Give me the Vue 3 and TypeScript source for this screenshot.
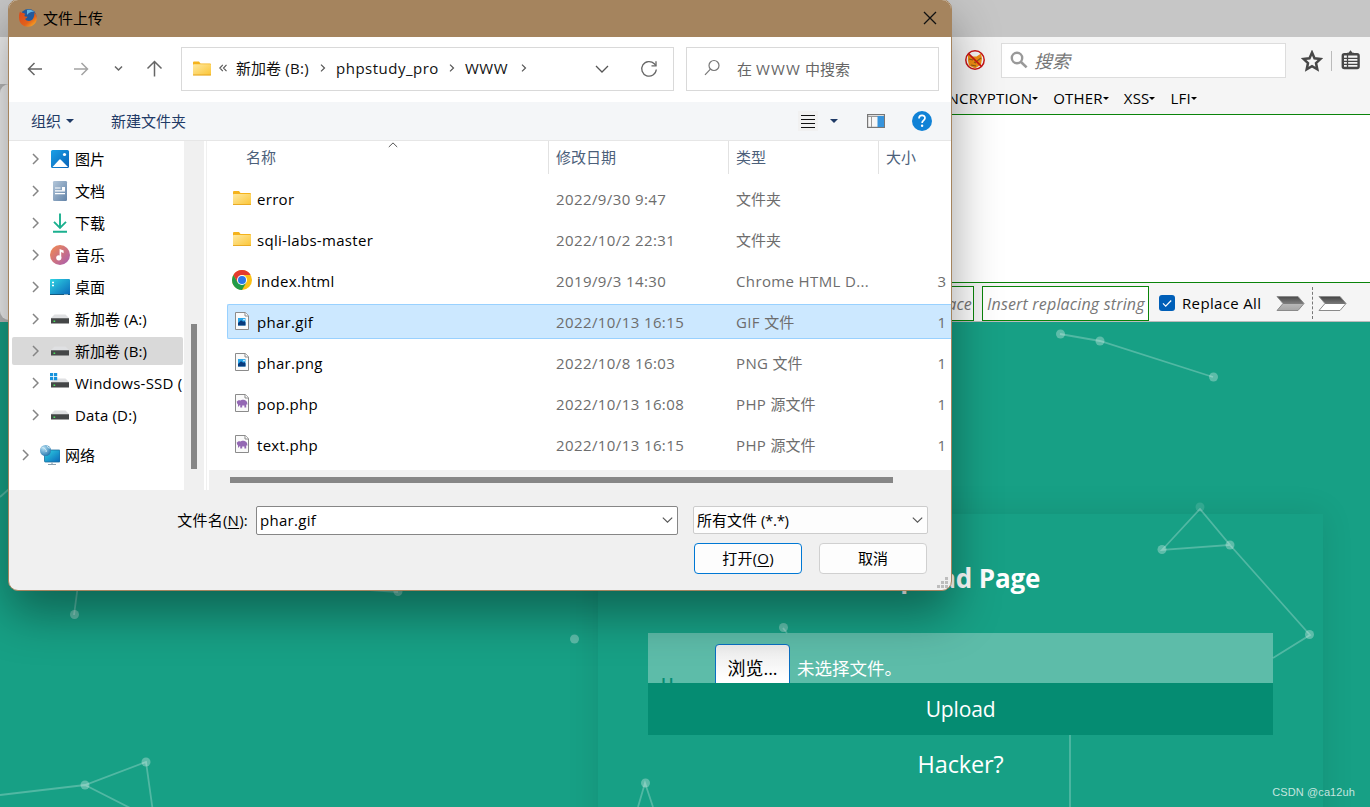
<script setup lang="ts">
interface TreeItem { icon: string; label: string; latin?: string; active?: boolean; root?: boolean }
interface FileRow { icon: string; name: string; date: string; kind: string; kindCjk: string; size: string; active?: boolean }

const tree: TreeItem[] = [
  { icon: 'pictures', label: '图片' },
  { icon: 'docs', label: '文档' },
  { icon: 'downloads', label: '下载' },
  { icon: 'music', label: '音乐' },
  { icon: 'desktop', label: '桌面' },
  { icon: 'drive', label: '新加卷', latin: ' (A:)' },
  { icon: 'drive', label: '新加卷', latin: ' (B:)', active: true },
  { icon: 'windrive', label: '', latin: 'Windows-SSD (' },
  { icon: 'drive', label: '', latin: 'Data (D:)' },
  { icon: 'network', label: '网络', root: true },
]

const files: FileRow[] = [
  { icon: 'folder', name: 'error', date: '2022/9/30 9:47', kind: '', kindCjk: '文件夹', size: '' },
  { icon: 'folder', name: 'sqli-labs-master', date: '2022/10/2 22:31', kind: '', kindCjk: '文件夹', size: '' },
  { icon: 'chrome', name: 'index.html', date: '2019/9/3 14:30', kind: 'Chrome HTML D...', kindCjk: '', size: '3' },
  { icon: 'image', name: 'phar.gif', date: '2022/10/13 16:15', kind: 'GIF ', kindCjk: '文件', size: '1', active: true },
  { icon: 'image', name: 'phar.png', date: '2022/10/8 16:03', kind: 'PNG ', kindCjk: '文件', size: '1' },
  { icon: 'php', name: 'pop.php', date: '2022/10/13 16:08', kind: 'PHP ', kindCjk: '源文件', size: '1' },
  { icon: 'php', name: 'text.php', date: '2022/10/13 16:15', kind: 'PHP ', kindCjk: '源文件', size: '1' },
]

const menus = ['ENCRYPTION', 'OTHER', 'XSS', 'LFI']

const dots: [number, number][] = [
  [1060.5, 12], [1100, 19], [1213.5, 55], [1162, 227.5], [1230, 223], [1309.5, 312.5], [783.5, 305.5],
  [574.5, 317], [74.5, 292.5], [398, 269.5], [146, 440], [85, 463], [645.5, 461],
]
</script>

<template>
  <div class="screen">
    <svg class="defs" width="0" height="0">
      <defs>
        <linearGradient id="gFolder" x1="0" y1="0" x2="1" y2="1"><stop offset="0" stop-color="#ffe9a0" /><stop offset="1" stop-color="#fbc536" /></linearGradient>
        <linearGradient id="gBlue" x1="0" y1="0" x2="1" y2="1"><stop offset="0" stop-color="#1aa0e6" /><stop offset="1" stop-color="#0862b8" /></linearGradient>
        <linearGradient id="gDesk" x1="0" y1="0" x2="1" y2="1"><stop offset="0" stop-color="#2fd5e3" /><stop offset="1" stop-color="#0a67ba" /></linearGradient>
        <linearGradient id="gDoc" x1="0" y1="0" x2="1" y2="1"><stop offset="0" stop-color="#b3c6d9" /><stop offset="1" stop-color="#6283a8" /></linearGradient>
        <linearGradient id="gMusic" x1="0" y1="0" x2="1" y2="1"><stop offset="0" stop-color="#f58b4c" /><stop offset="1" stop-color="#a65bb4" /></linearGradient>
        <linearGradient id="gFox" x1="0" y1="0" x2="1" y2="1"><stop offset="0" stop-color="#d8481c" /><stop offset=".6" stop-color="#e2601a" /><stop offset="1" stop-color="#ffbf2a" /></linearGradient>
        <linearGradient id="gArrow" x1="0" y1="0" x2="0" y2="1"><stop offset="0" stop-color="#4a4a4a" /><stop offset=".5" stop-color="#7c7c7c" /><stop offset=".52" stop-color="#b8b8b8" /><stop offset="1" stop-color="#a5a5a5" /></linearGradient>
        <linearGradient id="gArrow2" x1="0" y1="0" x2="0" y2="1"><stop offset="0" stop-color="#444" /><stop offset=".5" stop-color="#777" /><stop offset=".52" stop-color="#fff" /><stop offset="1" stop-color="#fff" /></linearGradient>
        <radialGradient id="gGlobe" cx=".35" cy=".3" r=".8"><stop offset="0" stop-color="#b5e0f5" /><stop offset="1" stop-color="#1b6fa8" /></radialGradient>
      </defs>
    </svg>

    <div class="browser">
      <div class="tabs"></div>
      <div class="navbar">
        <svg class="fox-off" width="20" height="20" viewBox="0 0 20 20">
          <path d="M3 4l4 2.500h4.500l4.500-3 1 5-1 6-6 4-6-3-1-5z" fill="#ef8d12" />
          <path d="M4 9l4 1M12 11l4-3M6 15l5 1M9 12l2 1" stroke="#8a5a1a" stroke-width="1.100" />
          <circle cx="10" cy="10" r="9.200" fill="none" stroke="#c81414" stroke-width="1.500" />
          <path d="M3.600 3.600l12.800 12.800" stroke="#c81414" stroke-width="1.500" />
        </svg>
        <div class="searchbox">
          <svg width="18" height="18" viewBox="0 0 18 18"><circle cx="7" cy="7" r="5.200" fill="none" stroke="#999" stroke-width="2.400" /><path d="M11 11l5.600 5.400" stroke="#999" stroke-width="2.600" /></svg>
          <span>搜索</span>
        </div>
        <svg class="star" width="22" height="22" viewBox="0 0 22 22"><path d="M11 2.600l2.500 5.700 6 .6-4.500 4.200 1.300 6.200L11 16.200l-5.300 3.100L7 13.100 2.500 8.900l6-.6z" fill="none" stroke="#474747" stroke-width="2.500" /></svg>
        <i class="vsep"></i>
        <svg class="clip" width="20" height="20" viewBox="0 0 20 20"><path d="M6 4V2.800h1.500L9.500.300l2 2.500H13V4" fill="#474747" /><rect x="1.800" y="4.200" width="15.800" height="13.800" rx="1.500" fill="none" stroke="#474747" stroke-width="2.400" /><path d="M3 8.300h14M3 11.300h14M3 14.300h14M6.500 5v12" stroke="#474747" stroke-width="1.300" /></svg>
      </div>
      <div class="menubar">
        <span v-for="m in menus" :key="m" class="menu">{{ m }}<i></i></span>
      </div>
      <div class="blank"></div>
      <div class="replacebar">
        <div class="rin first"><span>Insert replace</span></div>
        <div class="rin"><span>Insert replacing string</span></div>
        <svg class="check" width="16" height="16" viewBox="0 0 16 16"><rect width="16" height="16" rx="3" fill="#005fb8" /><path d="M4 8.400l2.700 2.700L12.200 5.500" fill="none" stroke="#fff" stroke-width="1.200" /></svg>
        <span class="rall">Replace All</span>
        <svg class="arr" width="29" height="17" viewBox="0 0 29 17"><path d="M1 1.500h21l6 7-6 7H1l6-7z" fill="url(#gArrow)" stroke="#8a8a8a" /></svg>
        <i class="dash"></i>
        <svg class="arr" width="29" height="17" viewBox="0 0 29 17"><path d="M1 1.500h21l6 7-6 7H1l6-7z" fill="url(#gArrow2)" stroke="#8a8a8a" /></svg>
      </div>
      <div class="page">
        <svg class="particles" width="1370" height="485" viewBox="0 0 1370 485">
          <g stroke="#fff" stroke-opacity=".25" stroke-width="1.800" fill="none">
            <path d="M1060 12L1100 19 1213 55M1162 228L1200 187 1230 223zM1230 223L1310 313 1273 336M1070 413v72M783 306l4 5M74 293l4-30M370 268l28 2M0 473l85-10 61-23 7 50M85 463l55 28M638 485l7-24 8 24M0 175l9-8" />
          </g>
          <g fill="#fff" fill-opacity=".3"><circle v-for="(d, i) in dots" :key="i" :cx="d[0]" :cy="d[1]" r="4.500" /><circle cx="1200" cy="185" r="4.500" fill-opacity=".12" /></g>
        </svg>
        <div class="card">
          <h1>Upload Page</h1>
          <div class="field">
            <span class="ghost">U</span>
            <span class="browse">浏览...</span>
            <span class="nofile">未选择文件。</span>
          </div>
          <div class="submit">Upload</div>
          <div class="hacker">Hacker?</div>
        </div>
        <div class="mark">CSDN @ca12uh</div>
      </div>
    </div>
    <div class="edge"><i></i><b></b></div>

    <div class="dialog">
      <div class="title">
        <svg width="20" height="20" viewBox="0 0 20 20"><circle cx="10.500" cy="9" r="8" fill="#225a9c" /><path d="M9 2c3-1 6 .2 7.500 2-3-.8-6 .6-7.500 3z" fill="#64b4e2" /><path d="M2 3.500c.4 1 1.400 1.500 2.800 1.300L7.500 6c-1 .8-1.500 1.700-.6 2.400l2.600.4c-.4 1.400-1.700 1.600-2.400 2.100 1.300 2.600 6.300 2.900 8.200-.6.800-2.200 1.500-4 1-6 2 1.800 2.800 4.300 2.500 7-.6 4.300-4.200 7.500-8.800 7.500C5 18.800 1 15 1 10 .9 7.500 1.200 5.300 2 3.500z" fill="url(#gFox)" /></svg>
        <span>文件上传</span>
        <svg class="close" width="14" height="14" viewBox="0 0 14 14"><path d="M1 1l12 12M13 1L1 13" stroke="#111" stroke-width="1.300" /></svg>
      </div>

      <div class="nav">
        <svg class="arrows" width="136" height="20" viewBox="0 0 136 20" fill="none" stroke-width="1.500">
          <path d="M15 10H1.500M7.500 4l-6 6 6 6" stroke="#666" />
          <path d="M47 10h13.500M54.500 4l6 6-6 6" stroke="#a3a3a3" />
          <path d="M88 7.500l3.500 3.500L95 7.500" stroke="#666" />
          <path d="M127.500 17.500v-15M120.500 9.500l7-7 7 7" stroke="#666" />
        </svg>
        <div class="address">
          <svg class="fold" width="18" height="15" viewBox="0 0 18 15"><path d="M0 1.500Q0 .5 1 .5h5l1.500 2H17q1 0 1 1V6H0z" fill="#f5b31c" /><rect y="3.200" width="18" height="11" rx=".8" fill="url(#gFolder)" /><path d="M0 14h18" stroke="#e5a520" /></svg>
          <svg class="dbl" width="8" height="8" viewBox="0 0 8 8" fill="none" stroke="#555" stroke-width="1.100"><path d="M3.800.8L.8 4l3 3.200M7.500.8l-3 3.200 3 3.200" /></svg>
          <span class="vol">新加卷<em class="en"> (B:)</em></span>
          <svg class="sep s1" width="6" height="8" viewBox="0 0 6 8"><path d="M1 .6L4.500 4 1 7.400" /></svg>
          <span class="pro">phpstudy_pro</span>
          <svg class="sep s2" width="6" height="8" viewBox="0 0 6 8"><path d="M1 .6L4.500 4 1 7.400" /></svg>
          <span class="www">WWW</span>
          <svg class="sep s3" width="6" height="8" viewBox="0 0 6 8"><path d="M1 .6L4.500 4 1 7.400" /></svg>
          <svg class="drop" width="14" height="8" viewBox="0 0 14 8"><path d="M1 1l6 6 6-6" fill="none" stroke="#555" stroke-width="1.300" /></svg>
          <svg class="reload" width="18" height="18" viewBox="0 0 18 18" fill="none" stroke="#666" stroke-width="1.300"><path d="M16.300 9.500a7.300 7.300 0 1 1-2-5.700l1.700 1.800" /><path d="M16 1.300v4.500h-4.500" /></svg>
        </div>
        <div class="find">
          <svg width="17" height="17" viewBox="0 0 17 17" fill="none" stroke="#777" stroke-width="1.200"><circle cx="10" cy="6.500" r="5" /><path d="M6.400 10.200L1 15.800" /></svg>
          <span>在 <em class="en www2">WWW</em> 中搜索</span>
        </div>
      </div>

      <div class="cmd">
        <span>组织</span><i class="tri"></i>
        <span class="newf">新建文件夹</span>
        <svg class="list" width="20" height="20" viewBox="0 0 20 20"><rect width="20" height="20" fill="#f1f1f1" /><path d="M3 4.500h14M3 8.500h14M3 12.500h14M3 16.500h14" stroke="#111" /></svg>
        <i class="tri t2"></i>
        <svg class="pane" width="18" height="14" viewBox="0 0 18 14"><rect x=".6" y=".6" width="16.800" height="12.800" fill="#f7f7f7" stroke="#777" stroke-width="1.200" /><path d="M1 2.500h16M4.500 3v10" stroke="#999" /><rect x="10.500" y="2" width="6.500" height="11" fill="#3794dc" /></svg>
        <svg class="help" width="20" height="20" viewBox="0 0 20 20"><circle cx="10" cy="10" r="10" fill="#1082d6" /><path d="M7 7.500c0-4 6-4 6-.5 0 2.300-2.900 2.400-2.900 5" fill="none" stroke="#fff" stroke-width="1.700" /><circle cx="10.100" cy="14.800" r="1.200" fill="#fff" /></svg>
      </div>

      <div class="body">
        <div class="tree">
          <div v-for="t in tree" :key="t.label + t.latin" class="node" :class="{ active: t.active, root: t.root }">
            <svg class="chev" width="7" height="12" viewBox="0 0 7 12"><path d="M1 1l5 5-5 5" fill="none" stroke="#858585" stroke-width="1.500" /></svg>
            <svg class="nico" width="20" height="20" viewBox="0 0 20 20">
              <g v-if="t.icon === 'pictures'"><rect x="1" y="1" width="18" height="18" rx="1.500" fill="url(#gBlue)" /><path d="M2.500 18l6.700-7.300q.8-.7 1.600 0L18 18z" fill="#fff" /><circle cx="14.500" cy="5.500" r="1.600" fill="#fff" /></g>
              <g v-else-if="t.icon === 'docs'"><rect x="3" y="0" width="14" height="20" rx="1.200" fill="url(#gDoc)" /><path d="M5 7h5.500M5 9.800h10M5 12.600h10" stroke="#fff" stroke-width="1.200" /><rect x="12" y="6" width="3" height="3.500" fill="#fff" /></g>
              <g v-else-if="t.icon === 'downloads'" fill="none" stroke="#1bb08f" stroke-width="1.900"><path d="M10 .5v14M4 8.800l6 6 6-6M3 18.800h14" /></g>
              <g v-else-if="t.icon === 'music'"><circle cx="10" cy="10" r="10" fill="url(#gMusic)" /><circle cx="8.800" cy="12.800" r="2.600" fill="#fff" /><path d="M9.600 13V4l4 1.500v2.700L11.200 7v6z" fill="#fff" /></g>
              <g v-else-if="t.icon === 'desktop'"><rect x="0" y="2" width="20" height="16" rx="1" fill="url(#gDesk)" /><path d="M2 5.500h2M2 8.500h2" stroke="#fff" stroke-width="1.700" /><path d="M0 17.500h20" stroke="#145a80" /><path d="M14.500 17.500h4" stroke="#fff" stroke-dasharray="1 1" /></g>
              <g v-else-if="t.icon === 'network'"><rect x="4.500" y="5" width="15.500" height="12" rx=".8" fill="url(#gDesk)" stroke="#1d6c9c" stroke-width=".8" /><path d="M12 17.500v2M8 19.500h8" stroke="#8aa0b0" stroke-width="1.200" /><circle cx="5.500" cy="5.500" r="5.500" fill="url(#gGlobe)" /><path d="M1.500 3c2-.8 3 0 3.500 1s2 1 1 3M7.500 1c0 1.500 1 2 2.500 2" stroke="#d7eef5" fill="none" /></g>
              <g v-else>
                <path d="M4.500 5.500h11L19 9H1z" fill="#dfe0e2" /><rect x="1" y="9" width="18" height="5.500" fill="#444647" /><rect x="1" y="9" width="18" height="1" fill="#6b6d6e" /><rect x="3.500" y="11.500" width="1.700" height="1.500" fill="#49e05d" />
                <g v-if="t.icon === 'windrive'" fill="#1692dc"><rect x="0" y="0" width="3.200" height="3.200" /><rect x="4" y="0" width="3.200" height="3.200" /><rect x="0" y="4" width="3.200" height="3.200" /><rect x="4" y="4" width="3.200" height="3.200" /></g>
              </g>
            </svg>
            <span>{{ t.label }}<em class="en" :class="{ wide: t.icon === 'windrive' }">{{ t.latin }}</em></span>
          </div>
        </div>
        <div class="track"><i></i></div>
        <div class="gutter"></div>
        <div class="main">
          <div class="heads">
            <span class="h1">名称</span><span class="h2">修改日期</span><span class="h3">类型</span><span class="h4">大小</span>
            <svg class="sort" width="10" height="6" viewBox="0 0 10 6"><path d="M.8 5L5 .9 9.200 5" fill="none" stroke="#555" /></svg>
          </div>
          <div class="rows">
            <div v-for="f in files" :key="f.name" class="row" :class="{ active: f.active }">
              <svg class="fico" width="20" height="20" viewBox="0 0 20 20">
                <g v-if="f.icon === 'folder'" transform="translate(1 3)"><path d="M0 1Q0 0 1 0h5l1.500 2H17q1 0 1 1v3H0z" fill="#f5b31c" /><rect y="3" width="18" height="11" rx=".8" fill="url(#gFolder)" /><path d="M0 13.500h18" stroke="#e9ab25" /></g>
                <g v-else-if="f.icon === 'chrome'"><circle cx="10" cy="10" r="10" fill="#fbc116" /><path d="M1.340 5A10 10 0 0 1 18.660 5H10L5.670 12.500z" fill="#e33b2e" /><path d="M1.340 5A10 10 0 0 0 10 20l4.330-7.500H5.670z" fill="#229b48" /><circle cx="10" cy="10" r="5" fill="#fff" /><circle cx="10" cy="10" r="4" fill="#2b78e8" /></g>
                <g v-else>
                  <path d="M3.500 1.500h9.800l3.200 3.200v13.800h-13z" fill="#fafafa" stroke="#8b8b8b" /><path d="M13 1.500V5h3.500" fill="#fff" stroke="#8b8b8b" />
                  <g v-if="f.icon === 'image'"><rect x="6" y="7" width="7.500" height="7.500" fill="#2aa5e8" /><path d="M6 12l3-2.800 2.300 1.600 1-.8 1.200 1.500v3H6z" fill="#083a7c" /><circle cx="12" cy="8.600" r=".8" fill="#fff" /></g>
                  <path v-else d="M5 8.500c1-1.500 2.500-1.500 3.500-1 1-1 5-1 6.200 1 .7 1.200.5 2 .8 3h-1.300v3h-1.800v-2h-2.200v2H8.200v-2.500l-1.200.8v.8H6v-2c-1-.8-1.500-2.500-1-4z" fill="#9468b4" />
                </g>
              </svg>
              <span class="name">{{ f.name }}</span>
              <span class="date">{{ f.date }}</span>
              <span class="kind"><em class="en">{{ f.kind }}</em>{{ f.kindCjk }}</span>
              <span class="size">{{ f.size }}</span>
            </div>
          </div>
          <div class="hscroll"><i></i></div>
        </div>
      </div>

      <div class="foot">
        <div class="line">
          <label>文件名(<u>N</u>):</label>
          <div class="combo name-in"><em class="en">phar.gif</em><svg width="11" height="6" viewBox="0 0 11 6"><path d="M.8.600l4.700 4.600L10.200.600" fill="none" stroke="#555" stroke-width="1.100" /></svg></div>
          <div class="combo type-in"><span>所有文件 <em>(*.*)</em></span><svg width="11" height="6" viewBox="0 0 11 6"><path d="M.8.600l4.700 4.600L10.200.600" fill="none" stroke="#555" stroke-width="1.100" /></svg></div>
        </div>
        <div class="btns">
          <div class="btn primary">打开(<u>O</u>)</div>
          <div class="btn">取消</div>
        </div>
      </div>
      <svg class="grip" width="11" height="11" viewBox="0 0 11 11" fill="#bdbdbd"><path d="M8 0h3v3H8zM4 4h3v3H4zM8 4h3v3H8zM0 8h3v3H0zM4 8h3v3H4zM8 8h3v3H8z" /></svg>
    </div>
  </div>
</template>

<style>
body { margin: 0; overflow: hidden; }
</style>

<style scoped>
* { box-sizing: border-box; }
.screen { position: relative; width: 1370px; height: 807px; overflow: hidden; font: 15px/20px "Open Sans", "Noto Sans CJK SC", sans-serif; color: #111; white-space: nowrap; }
.defs { position: absolute; }
svg { display: block; flex: none; }
em { font-style: normal; }
.en { letter-spacing: .3px; white-space: pre; }

.browser { display: flex; flex-direction: column; height: 807px; }
.tabs { height: 37px; flex: none; background: #c6c6c6; }
.navbar { height: 45px; flex: none; background: #f5f5f5; display: flex; align-items: center; padding: 2px 0 0 965px; }
.fox-off { margin-top: -1px; }
.searchbox { width: 285px; height: 35px; margin-left: 16px; border: 1px solid #ddd; background: #fff; display: flex; align-items: center; padding: 0 0 0 8px; gap: 6px; font-size: 18px; font-style: italic; color: #777; }
.searchbox svg { margin-top: -1px; }
.star { margin: 0 0 0 15px; }
.vsep { width: 1px; height: 20px; background: #bbb; margin: 0 9px 0 8px; }
.clip { margin-top: -1px; }
.menubar { height: 33px; flex: none; background: #f5f5f5; border-bottom: 1px solid #0a840a; display: flex; align-items: center; gap: 15px; padding-left: 939px; color: #000; }
.menu { display: flex; align-items: center; letter-spacing: .2px; }
.menu i { border: 3px solid transparent; border-top-color: #000; border-bottom: 0; }
.blank { height: 168px; flex: none; background: #fff; border-bottom: 1px solid #0a840a; }
.replacebar { height: 39px; flex: none; background: #f5f5f5; border-bottom: 1px solid #bbb; display: flex; align-items: center; padding: 0 0 0 864px; }
.rin { width: 167px; height: 35px; margin: 3px 0 0 8px; border: 1px solid #0a840a; background: #fff; display: flex; align-items: center; padding: 0 0 0 4px; font-size: 16px; font-style: italic; color: #777; letter-spacing: .17px; overflow: hidden; }
.rin.first { width: 110px; margin-left: 0; justify-content: flex-end; padding: 0 1px 0 0; }
.check { margin: 2px 0 0 10px; }
.rall { margin: 2px 0 0 7px; width: 94px; color: #000; letter-spacing: .35px; }
.arr { margin-top: 3px; }
.dash { height: 32px; border-left: 1px dashed #777; margin: 1px 5px 0 7px; }
.page { position: relative; height: 485px; flex: none; background: #17a085; overflow: hidden; }
.particles { position: absolute; left: 0; top: 0; }
.card { width: 725px; margin: 192px 0 0 598px; height: 400px; box-shadow: 0 0 30px rgba(0, 0, 0, .1); padding: 44px 50px 0; color: #fff; text-align: center; }
.card h1 { margin: 0; font-size: 26px; line-height: 40px; font-weight: 700; height: 75px; letter-spacing: -.15px; }
.field { position: relative; height: 50px; background: rgba(255, 255, 255, .3); display: flex; overflow: hidden; padding: 11px 0 0 13px; }
.ghost { color: #058c72; width: 54px; font-size: 17px; font-weight: 600; line-height: 30px; padding-top: 25px; text-align: left; }
.browse { width: 75px; height: 60px; border: 1px solid #0a6fc2; border-radius: 4px; background: linear-gradient(#ececec, #fff 60%); color: #000; font-size: 18px; line-height: 47px; letter-spacing: 0; }
.nofile { font-size: 17.500px; line-height: 49px; margin-left: 7px; }
.submit { height: 52px; background: #058c72; font-size: 21px; line-height: 52px; letter-spacing: -.15px; }
.hacker { font-size: 23.500px; line-height: 58px; letter-spacing: -.15px; }
.mark { position: absolute; right: 15px; bottom: 6px; font: 11px/18px "Liberation Sans", "Noto Sans", sans-serif; color: rgba(255, 255, 255, .75); letter-spacing: .1px; }

.edge { position: absolute; left: 0; top: 37px; width: 9px; height: 284px; background: #b9b9b9; overflow: hidden; }
.edge i { display: block; height: 47px; background: #f0f0f0; }
.edge b { display: block; width: 30px; height: 236px; background: #f0f0f0; border-radius: 9px; }

.dialog { position: absolute; left: 8px; top: -1px; width: 944px; height: 592px; border: 1px solid #a5845e; border-radius: 10px; background: #f0f0f0; box-shadow: 0 22px 48px rgba(0, 0, 0, .38); overflow: hidden; display: flex; flex-direction: column; }
.title { height: 37px; flex: none; background: #a5845e; display: flex; align-items: center; padding: 0 14px 1px 9px; color: #000; }
.title span { margin-left: 5px; }
.close { margin-left: auto; }
.nav { height: 65px; flex: none; background: #fff; display: flex; align-items: center; padding: 0 12px 2px 18px; }
.arrows { width: 136px; margin-top: 1px; }
.address { width: 493px; height: 44px; margin-left: 18px; border: 1px solid #d9d9d9; display: flex; align-items: center; padding: 0 0 1px 11px; color: #111; }
.dbl { margin: 0 9px 0 8px; }
.sep path { fill: none; stroke: #555; stroke-width: 1.200; }
.address .vol { width: 73px; }
.address .pro { letter-spacing: .5px; width: 102px; }
.address .www { width: 44px; letter-spacing: .5px; }
.s1 { margin: 0 10px 0 11px; }
.s2 { margin: 0 10px 0 11px; }
.s3 { margin-left: 12px; }
.drop { margin: 2px 0 0 auto; }
.reload { margin: 2px 15px 0 31px; }
.find { width: 253px; height: 44px; margin-left: 12px; border: 1px solid #d9d9d9; display: flex; align-items: center; padding: 0 0 0 17px; gap: 16px; color: #666; }
.find svg { margin-top: -2px; }
.www2 { letter-spacing: 1.200px; }
.cmd { height: 39px; flex: none; background: #f4f6f8; border-bottom: 1px solid #e6e6e6; display: flex; align-items: center; padding-left: 22px; color: #1f3a66; }
.tri { border: 4px solid transparent; border-top-color: #1f3a66; border-bottom: 0; margin-left: 5px; }
.newf { margin-left: 37px; }
.list { margin-left: 612px; }
.t2 { margin-left: 12px; }
.pane { margin-left: 29px; }
.help { margin-left: 27px; }
.body { height: 349px; flex: none; display: flex; background: #fff; }
.tree { width: 175px; padding: 4px 1px 0 3px; display: flex; flex-direction: column; gap: 4px; overflow: hidden; color: #000; }
.node { height: 28px; flex: none; display: flex; align-items: center; padding-left: 20px; border-radius: 2px; overflow: hidden; }
.node.active { background: #d9d9d9; }
.node.root { margin-top: 8px; padding-left: 10px; }
.nico { margin: 0 5px 0 11px; }
.node .en { letter-spacing: .15px; }
.node .wide { letter-spacing: .25px; }
.track { width: 20px; background: #f0f0f0; padding: 183px 0 0 7px; }
.track i { display: block; width: 6px; height: 145px; background: #868686; }
.gutter { width: 5px; border-left: 2px solid #fff; background: linear-gradient(90deg, #f0f0f0 1px, #fff 1px); }
.main { width: 742px; display: flex; flex-direction: column; }
.heads { position: relative; height: 33px; flex: none; display: flex; line-height: 33px; color: #4c607a; }
.h1 { width: 339px; padding-left: 37px; }
.h2, .h3, .h4 { border-left: 1px solid #e2e2e2; padding-left: 7px; }
.h2 { width: 180px; }
.h3 { width: 150px; }
.h4 { flex: 1; }
.sort { position: absolute; left: 179px; top: 1px; }
.rows { padding: 7px 0 0 18px; height: 296px; display: flex; flex-direction: column; gap: 6px; }
.row { height: 35px; flex: none; border: 1px solid transparent; border-right: 0; display: flex; align-items: center; padding-left: 4px; color: #6d6d6d; }
.row.active { background: #cce8ff; border-color: #99d1ff; border-radius: 2px 0 0 2px; }
.fico { margin-top: -2px; }
.name { width: 299px; margin-left: 5px; color: #000; letter-spacing: .3px; }
.date { width: 180px; letter-spacing: .4px; }
.kind { width: 160px; }
.kind .en { letter-spacing: .37px; }
.size { flex: 1; text-align: right; padding-right: 5px; }
.hscroll { height: 20px; background: #f0f0f0; padding: 7px 0 0 21px; }
.hscroll i { display: block; width: 663px; height: 6px; background: #868686; }
.foot { flex: none; height: 100px; padding-top: 16px; color: #000; }
.line { display: flex; height: 29px; align-items: flex-start; }
label { width: 239px; text-align: right; line-height: 28px; margin-right: 8px; letter-spacing: .25px; }
.combo { display: flex; align-items: center; justify-content: space-between; background: #fff; border: 1px solid #868686; border-radius: 2px; padding: 0 4px 0 3px; }
.name-in { width: 422px; height: 29px; padding-bottom: 1px; }
.type-in { width: 235px; height: 28px; margin-left: 15px; border-color: #ccc; background: #fdfdfd; }
.type-in em { letter-spacing: -.3px; }
u { text-underline-offset: 2px; }
.btns { display: flex; gap: 17px; margin: 8px 0 0 685px; }
.btn { width: 108px; height: 31px; border: 1px solid #d0d0d0; border-radius: 4px; background: #fdfdfd; text-align: center; line-height: 29px; }
.btn.primary { border-color: #0078d4; letter-spacing: .2px; }
.grip { position: absolute; right: 3px; bottom: 2px; }
</style>
